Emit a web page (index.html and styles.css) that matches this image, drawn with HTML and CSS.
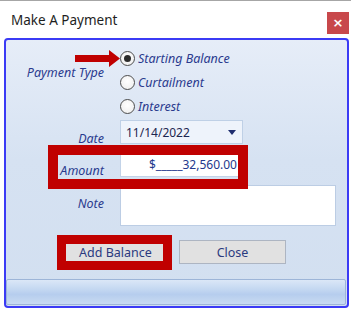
FILE: index.html
```html
<!DOCTYPE html>
<html lang="en">
<head>
    <meta charset="UTF-8">
    <meta name="viewport" content="width=device-width, initial-scale=1.0">
    <title>Make A Payment</title>
    <link rel="stylesheet" href="styles.css">
</head>
<body>
    <div class="window">
        <header class="titlebar">
            <span class="title">Make A Payment</span>
            <button class="close-x">&times;</button>
        </header>

        <main class="panel">
            <div class="row row-type">
                <label class="field-label">Payment Type</label>
                <div class="radios">
                    <div class="radio-item"><span class="radio checked"></span>Starting Balance</div>
                    <div class="radio-item"><span class="radio"></span>Curtailment</div>
                    <div class="radio-item"><span class="radio"></span>Interest</div>
                </div>
            </div>

            <div class="row row-date">
                <label class="field-label">Date</label>
                <div class="combo">
                    <span>11/14/2022</span>
                    <span class="caret"></span>
                </div>
            </div>

            <div class="row row-amount">
                <label class="field-label">Amount</label>
                <div class="amount-input">$_____32,560.00</div>
            </div>

            <div class="row row-note">
                <label class="field-label">Note</label>
                <div class="note-box"></div>
            </div>

            <div class="buttons">
                <button class="btn">Add Balance</button>
                <button class="btn">Close</button>
            </div>

            <div class="status-bar"></div>
        </main>

        <!-- annotation overlays -->
        <svg class="arrow" width="46" height="20" viewBox="0 0 46 20">
            <polygon points="0,5 34,5 34,0 45,8.5 34,17 34,12 0,12" fill="#c00000"/>
        </svg>
        <div class="mark mark-amount"></div>
        <div class="mark mark-button"></div>
    </div>
</body>
</html>
```

FILE: styles.css
```css
body {
    margin: 0;
    background: #fff;
    font-family: 'Noto Sans', 'Open Sans', sans-serif;
}

.window {
    position: relative;
    width: 351px;
    height: 310px;
    border-top: 1px solid #a6a6a6;
    box-sizing: border-box;
    background: #fff;
}

.titlebar {
    height: 37px;
    display: flex;
    align-items: center;
    justify-content: space-between;
    padding: 0 2px 0 11px;
}

.title {
    font-size: 13.5px;
    color: #1e1e1e;
}

.close-x {
    width: 22px;
    height: 22px;
    margin-top: 6px;
    border: none;
    padding: 0;
    background: #c8484b;
    color: #fff;
    font-size: 13px;
    font-weight: bold;
    line-height: 22px;
    font-family: 'DejaVu Sans', sans-serif;
}

.panel {
    height: 270px;
    margin: 0 2px 0 4px;
    box-sizing: border-box;
    border: 2px solid #3b3bf5;
    border-radius: 4px;
    background: linear-gradient(180deg, #e6edf8 0%, #d6e2f2 45%, #d2dff0 100%);
    display: flex;
    flex-direction: column;
    padding-top: 6px;
}

.row {
    display: grid;
    grid-template-columns: 98px 1fr;
    column-gap: 16px;
}

.field-label {
    text-align: right;
    font-style: italic;
    font-size: 12.5px;
    line-height: 16px;
    color: #2a3a8e;
    white-space: nowrap;
}

.row-type { height: 72px; }
.row-type .field-label { padding-top: 19px; }

.radios {
    display: flex;
    flex-direction: column;
}

.radio-item {
    height: 24px;
    display: flex;
    align-items: center;
    gap: 3px;
    font-style: italic;
    font-size: 12.5px;
    color: #2a3a8e;
}

.radio {
    width: 13px;
    height: 13px;
    border: 1px solid #4d4d4d;
    border-radius: 50%;
    background: radial-gradient(circle at 50% 40%, #fff 0%, #ececec 100%);
    display: flex;
    align-items: center;
    justify-content: center;
}

.radio.checked::after {
    content: "";
    width: 7px;
    height: 7px;
    border-radius: 50%;
    background: #2b2b2b;
}

.row-date {
    height: 24px;
    margin-top: 2px;
}

.row-date .field-label { padding-top: 11px; }

.combo {
    width: 123px;
    height: 24px;
    box-sizing: border-box;
    border: 1px solid #bfd0e6;
    background: #eef3fb;
    display: flex;
    align-items: center;
    justify-content: space-between;
    padding: 0 6px 0 5px;
    font-size: 12px;
    color: #1c2650;
}

.caret {
    width: 0;
    height: 0;
    border-left: 4px solid transparent;
    border-right: 4px solid transparent;
    border-top: 5px solid #1f2d6e;
}

.row-amount {
    height: 24px;
    margin-top: 9px;
}

.row-amount .field-label { padding-top: 10px; }

.amount-input {
    width: 123px;
    height: 24px;
    box-sizing: border-box;
    border: 1px solid #c3d3e8;
    background: #fff;
    text-align: right;
    padding-right: 5px;
    font-size: 12px;
    line-height: 22px;
    color: #24388c;
}

.row-note {
    height: 41px;
    margin-top: 8px;
}

.row-note .field-label { padding-top: 11px; }

.note-box {
    width: 216px;
    height: 41px;
    box-sizing: border-box;
    border: 1px solid #bccde4;
    background: #fff;
}

.buttons {
    display: flex;
    gap: 10px;
    margin: 14px 0 0 56px;
}

.btn {
    width: 107px;
    height: 24px;
    border: 1px solid #adb5c2;
    background: #e1e1e1;
    font-family: inherit;
    font-size: 12.5px;
    color: #2b3a7f;
    padding: 0;
}

.status-bar {
    margin: auto 1px 1px 0;
    height: 26px;
    box-sizing: border-box;
    border: 1px solid #9db5d8;
    border-radius: 2px;
    background: linear-gradient(180deg, #dbe7f7 0%, #c3d7f1 40%, #b6cdee 60%, #c9dbf2 100%);
}

/* red annotation marks */
.arrow {
    position: absolute;
    left: 75px;
    top: 49px;
}

.mark {
    position: absolute;
    box-sizing: border-box;
    border: 10px solid #c00000;
}

.mark-amount {
    left: 48px;
    top: 144px;
    width: 200px;
    height: 44px;
}

.mark-button {
    left: 57px;
    top: 234px;
    width: 115px;
    height: 35px;
    border-width: 9px;
}
```
